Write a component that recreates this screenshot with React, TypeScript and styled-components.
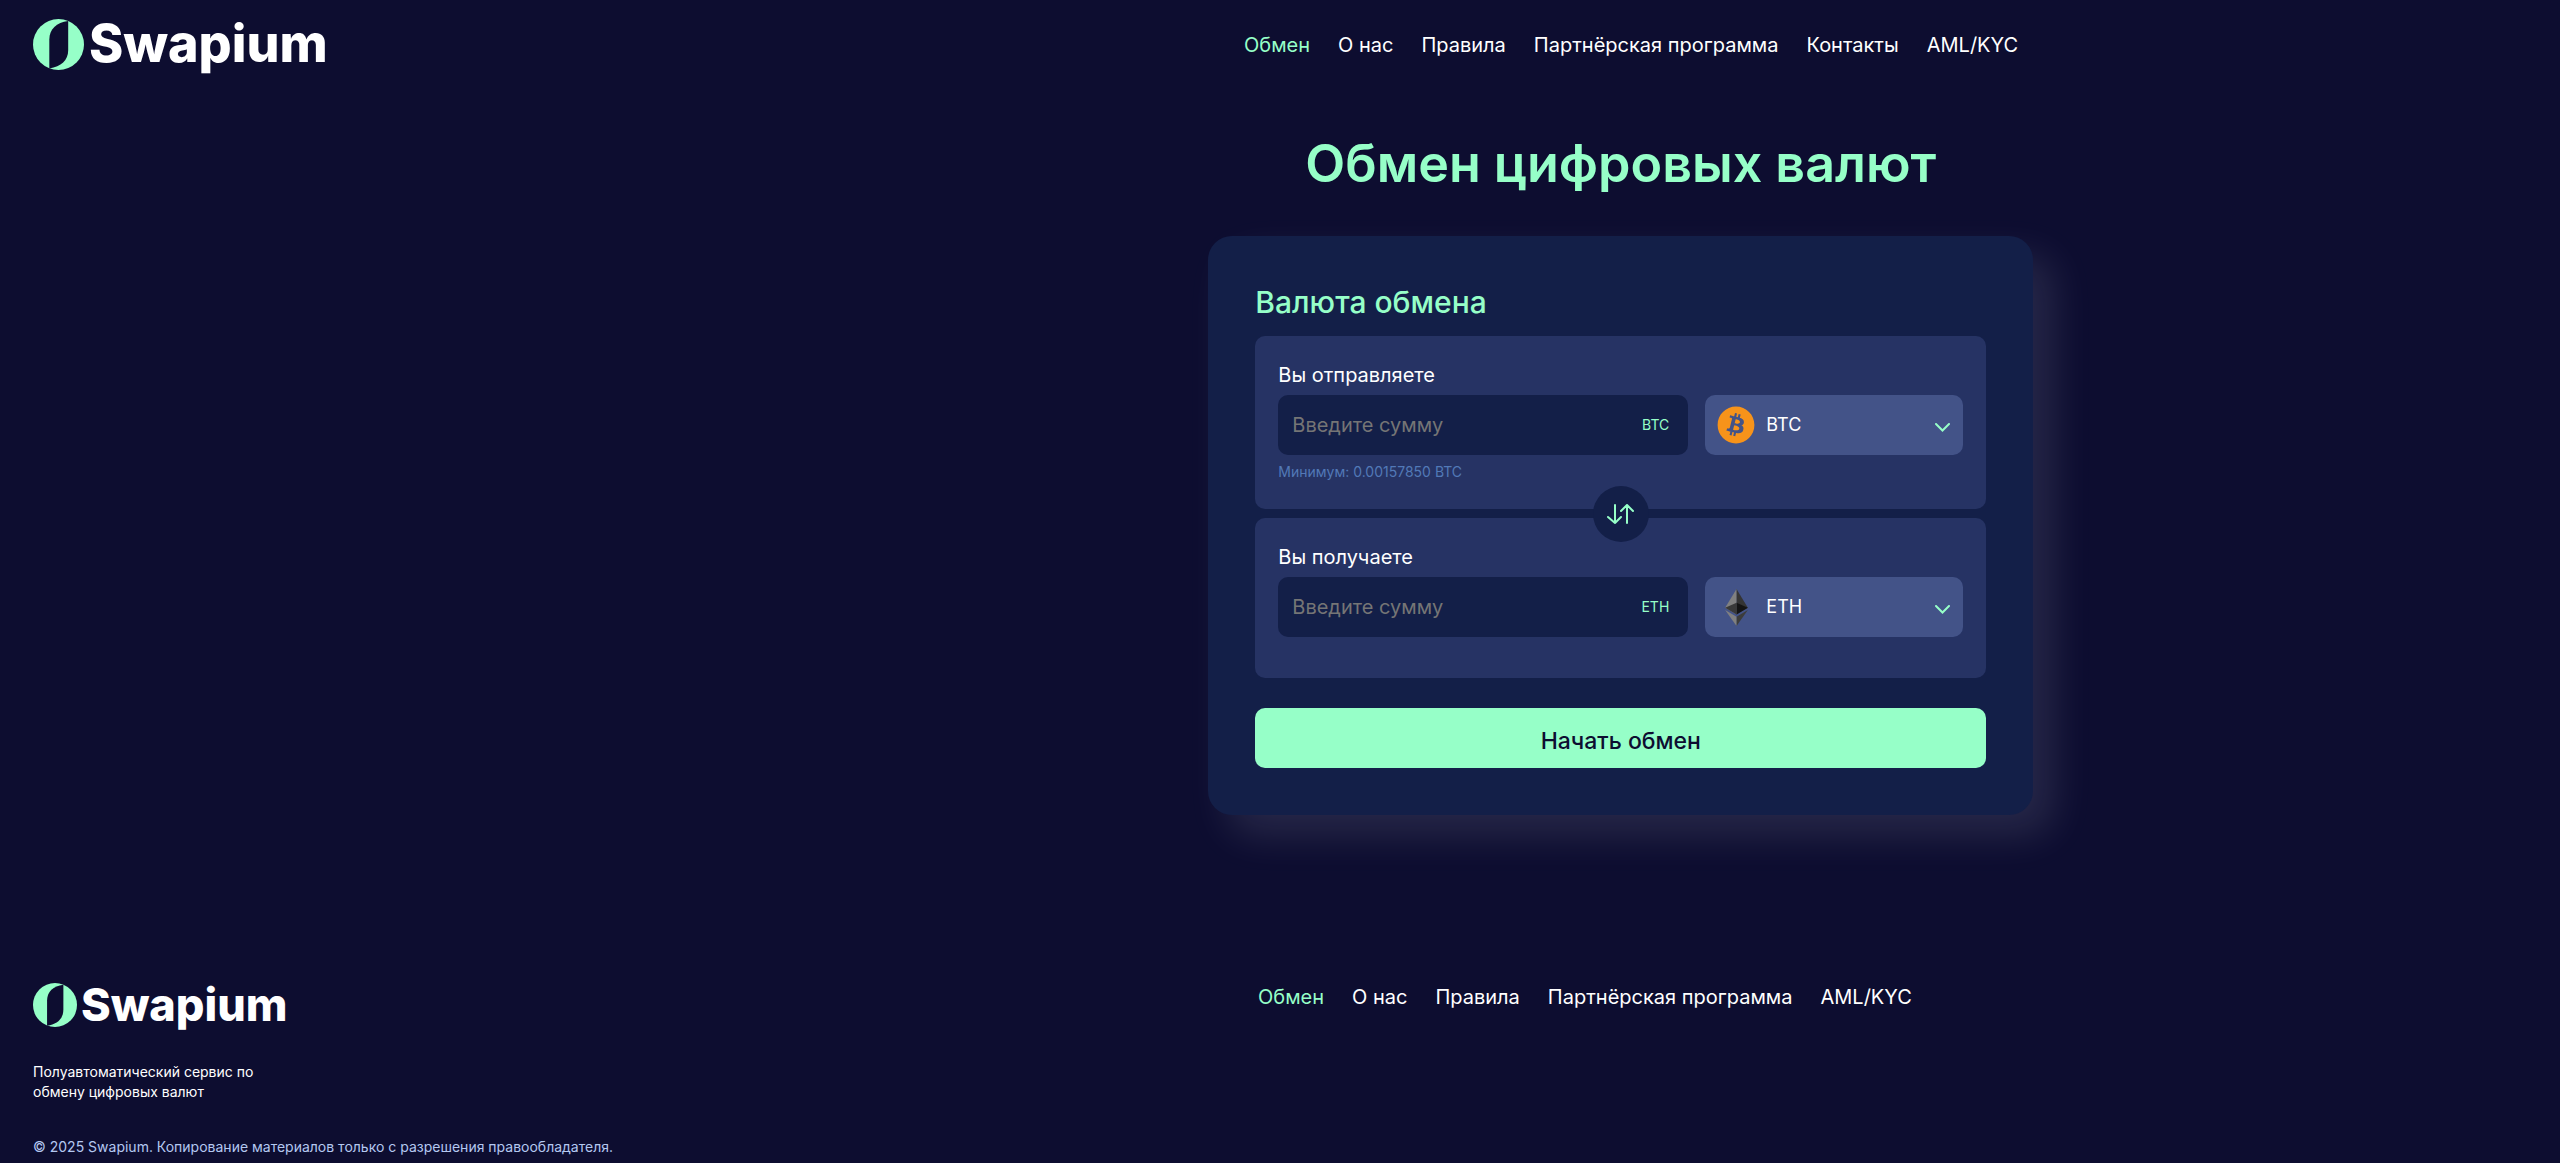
import React, { useState } from 'react';
import styled, { createGlobalStyle } from 'styled-components';
import { FaBitcoin } from 'react-icons/fa';

const mint = '#96ffc8';
const navy = '#131f48';
const night = '#0d0d30';

const GlobalStyle = createGlobalStyle`
  *, *::before, *::after { box-sizing: border-box; }
  body {
    margin: 0;
    background: ${night};
    color: #fff;
    font-family: Inter, "Noto Sans", sans-serif;
    font-size: 20px;
    line-height: 26px;
    font-weight: 400;
  }
  button, input, select { font: inherit; color: inherit; }
`;

const Page = styled.div`
  min-height: 100vh;
  display: flex;
  flex-direction: column;
`;

const Header = styled.header`
  min-height: 88px;
  padding: 0 33px;
  display: grid;
  grid-template-columns: 1211fr 1283fr;
  align-items: center;
  @media (max-width: 1600px) {
    display: flex;
    flex-wrap: wrap;
    gap: 20px 40px;
  }
`;

const LogoLink = styled.a<{ $small?: boolean }>`
  display: flex;
  width: fit-content;
  align-items: center;
  gap: ${(p) => (p.$small ? 4 : 5)}px;
  color: #fff;
  text-decoration: none;
  font-size: ${(p) => (p.$small ? 45 : 52)}px;
  line-height: ${(p) => (p.$small ? 50 : 56)}px;
  font-weight: 800;
  svg {
    width: ${(p) => (p.$small ? 44 : 51)}px;
    height: ${(p) => (p.$small ? 44 : 51)}px;
  }
`;

const Nav = styled.nav`
  display: flex;
  flex-wrap: wrap;
  gap: 12px 28px;
  padding-top: 2px;
`;

const NavLink = styled.a<{ $active?: boolean }>`
  color: ${(p) => (p.$active ? mint : '#fff')};
  text-decoration: none;
  &:hover { color: ${mint}; }
`;

const Main = styled.main`
  width: min(825px, 100%);
  margin: 44px 0 0 47.2%;
  display: flex;
  flex-direction: column;
  @media (max-width: 1600px) { margin-left: auto; margin-right: auto; }
`;

const Title = styled.h1`
  margin: 0 0 40px;
  text-align: center;
  color: ${mint};
  font-size: 52px;
  line-height: 64px;
  font-weight: 600;
`;

const Card = styled.form`
  padding: 47px;
  border-radius: 24px;
  background: ${navy};
  box-shadow: 20px 20px 40px rgba(230, 240, 255, 0.12);
`;

const CardTitle = styled.h2`
  margin: 0 0 15px;
  color: ${mint};
  font-size: 30px;
  line-height: 38px;
  font-weight: 500;
`;

const Panel = styled.section`
  min-height: 160px;
  padding: 26px 23px;
  border-radius: 10px;
  background: #263364;
`;

const Label = styled.label`
  display: block;
  margin-bottom: 7px;
`;

const Row = styled.div`
  display: grid;
  grid-template-columns: 410fr 258fr;
  gap: 17px;
  height: 60px;
`;

const AmountBox = styled.div`
  display: flex;
  align-items: center;
  padding: 0 19px 0 14px;
  border-radius: 10px;
  background: ${navy};
`;

const AmountInput = styled.input`
  flex: 1;
  min-width: 0;
  height: 100%;
  padding: 0;
  border: 0;
  outline: 0;
  background: none;
  &::placeholder { color: #757575; opacity: 1; }
`;

const Unit = styled.span`
  color: ${mint};
  font-size: 14px;
`;

const Picker = styled.div`
  position: relative;
`;

const PickerSelect = styled.select`
  width: 100%;
  height: 100%;
  padding: 0 60px 0 61px;
  border: 0;
  border-radius: 10px;
  background: #435388;
  appearance: none;
  font-size: 18px;
  option { color: #fff; background: #263364; }
`;

const CoinSlot = styled.span`
  position: absolute;
  left: 12px;
  top: 0;
  bottom: 0;
  width: 38px;
  display: flex;
  align-items: center;
  justify-content: center;
  pointer-events: none;
  color: #f7931a;
`;

const Chevron = styled.svg`
  position: absolute;
  right: 13px;
  top: 28px;
  width: 15px;
  height: 9px;
  pointer-events: none;
`;

const Hint = styled.p`
  margin: 6px 0 0;
  color: #5279b7;
  font-size: 14px;
  line-height: 22px;
`;

const Divider = styled.div`
  height: 9px;
  display: flex;
  align-items: center;
  justify-content: center;
`;

const SwapButton = styled.button`
  position: relative;
  flex: none;
  display: grid;
  place-items: center;
  width: 56px;
  height: 56px;
  padding: 0;
  border: 0;
  border-radius: 50%;
  background: ${navy};
  cursor: pointer;
`;

const Submit = styled.button`
  width: 100%;
  height: 60px;
  margin-top: 30px;
  padding: 6px 0 0;
  border: 0;
  border-radius: 10px;
  background: ${mint};
  color: ${night};
  font-size: 23px;
  font-weight: 500;
  cursor: pointer;
`;

const Footer = styled.footer`
  margin-top: 165px;
  padding: 0 33px 6px;
  display: grid;
  grid-template-columns: 1225fr 1269fr;
  @media (max-width: 1600px) {
    grid-template-columns: 1fr;
    gap: 24px;
  }
`;

const FooterNav = styled(Nav)`
  align-self: start;
  padding-top: 4px;
`;

const SmallText = styled.p<{ $muted?: boolean }>`
  margin: ${(p) => (p.$muted ? 35 : 32)}px 0 0;
  color: ${(p) => (p.$muted ? '#b4c8f0' : '#fff')};
  max-width: ${(p) => (p.$muted ? 'none' : '240px')};
  font-size: 14px;
  line-height: 20px;
`;

const links = ['Обмен', 'О нас', 'Правила', 'Партнёрская программа', 'Контакты', 'AML/KYC'];

function Logo({ small }: { small?: boolean }) {
  return (
    <LogoLink href="#" $small={small}>
      <svg viewBox="0 0 100 100" aria-hidden="true">
        <circle cx="50" cy="50" r="50" fill={mint} />
        <path d="M69 4V61C69 81 55 94 32 97V40C32 20 46 7 69 4Z" fill={night} />
      </svg>
      <span>Swapium</span>
    </LogoLink>
  );
}

function EthIcon() {
  return (
    <svg width="23" height="37" viewBox="0 0 256 417" aria-hidden="true">
      <path fill="#343434" d="M128 0L125 9.5V285L128 288L256 212Z" />
      <path fill="#808080" d="M128 0L0 212L128 288V154Z" />
      <path fill="#3c3c3b" d="M128 312L126 314V412L128 417L256 237Z" />
      <path fill="#808080" d="M128 417V312L0 237Z" />
      <path fill="#141414" d="M128 288L256 212L128 154Z" />
      <path fill="#393939" d="M0 212L128 288V154Z" />
    </svg>
  );
}

interface AmountPanelProps {
  id: string;
  label: string;
  coin: string;
  hint?: string;
  onCoin: (coin: string) => void;
}

function AmountPanel({ id, label, coin, hint, onCoin }: AmountPanelProps) {
  return (
    <Panel>
      <Label htmlFor={id}>{label}</Label>
      <Row>
        <AmountBox>
          <AmountInput id={id} type="text" inputMode="decimal" placeholder="Введите сумму" />
          <Unit>{coin}</Unit>
        </AmountBox>
        <Picker>
          <PickerSelect aria-label={label} value={coin} onChange={(e) => onCoin(e.target.value)}>
            <option>BTC</option>
            <option>ETH</option>
          </PickerSelect>
          <CoinSlot>{coin === 'BTC' ? <FaBitcoin size={38} /> : <EthIcon />}</CoinSlot>
          <Chevron viewBox="0 0 15 9" fill="none" stroke={mint} strokeWidth="2" strokeLinecap="round">
            <path d="M1 1L7.5 7.5L14 1" />
          </Chevron>
        </Picker>
      </Row>
      {hint && <Hint>{hint}</Hint>}
    </Panel>
  );
}

export default function App() {
  const [from, setFrom] = useState('BTC');
  const [to, setTo] = useState('ETH');
  const swap = () => {
    setFrom(to);
    setTo(from);
  };

  return (
    <Page>
      <GlobalStyle />
      <Header>
        <Logo />
        <Nav>
          {links.map((l, i) => <NavLink key={l} href="#" $active={i === 0}>{l}</NavLink>)}
        </Nav>
      </Header>
      <Main>
        <Title>Обмен цифровых валют</Title>
        <Card onSubmit={(e) => e.preventDefault()}>
          <CardTitle>Валюта обмена</CardTitle>
          <AmountPanel id="send" label="Вы отправляете" coin={from} onCoin={setFrom} hint="Минимум: 0.00157850 BTC" />
          <Divider>
            <SwapButton type="button" aria-label="Поменять местами" onClick={swap}>
              <svg width="28" height="20" viewBox="0 0 28 20" fill="none" stroke={mint} strokeWidth="2" strokeLinecap="round" strokeLinejoin="round">
                <path d="M8 1V19M1 13L8 19L14 13" />
                <path d="M20 19V1M14 7L20 1L26 7" />
              </svg>
            </SwapButton>
          </Divider>
          <AmountPanel id="receive" label="Вы получаете" coin={to} onCoin={setTo} />
          <Submit type="submit">Начать обмен</Submit>
        </Card>
      </Main>
      <Footer>
        <div>
          <Logo small />
          <SmallText>Полуавтоматический сервис по обмену цифровых валют</SmallText>
          <SmallText $muted>© 2025 Swapium. Копирование материалов только с разрешения правообладателя.</SmallText>
        </div>
        <FooterNav>
          {links.filter((l) => l !== 'Контакты').map((l, i) => <NavLink key={l} href="#" $active={i === 0}>{l}</NavLink>)}
        </FooterNav>
      </Footer>
    </Page>
  );
}
